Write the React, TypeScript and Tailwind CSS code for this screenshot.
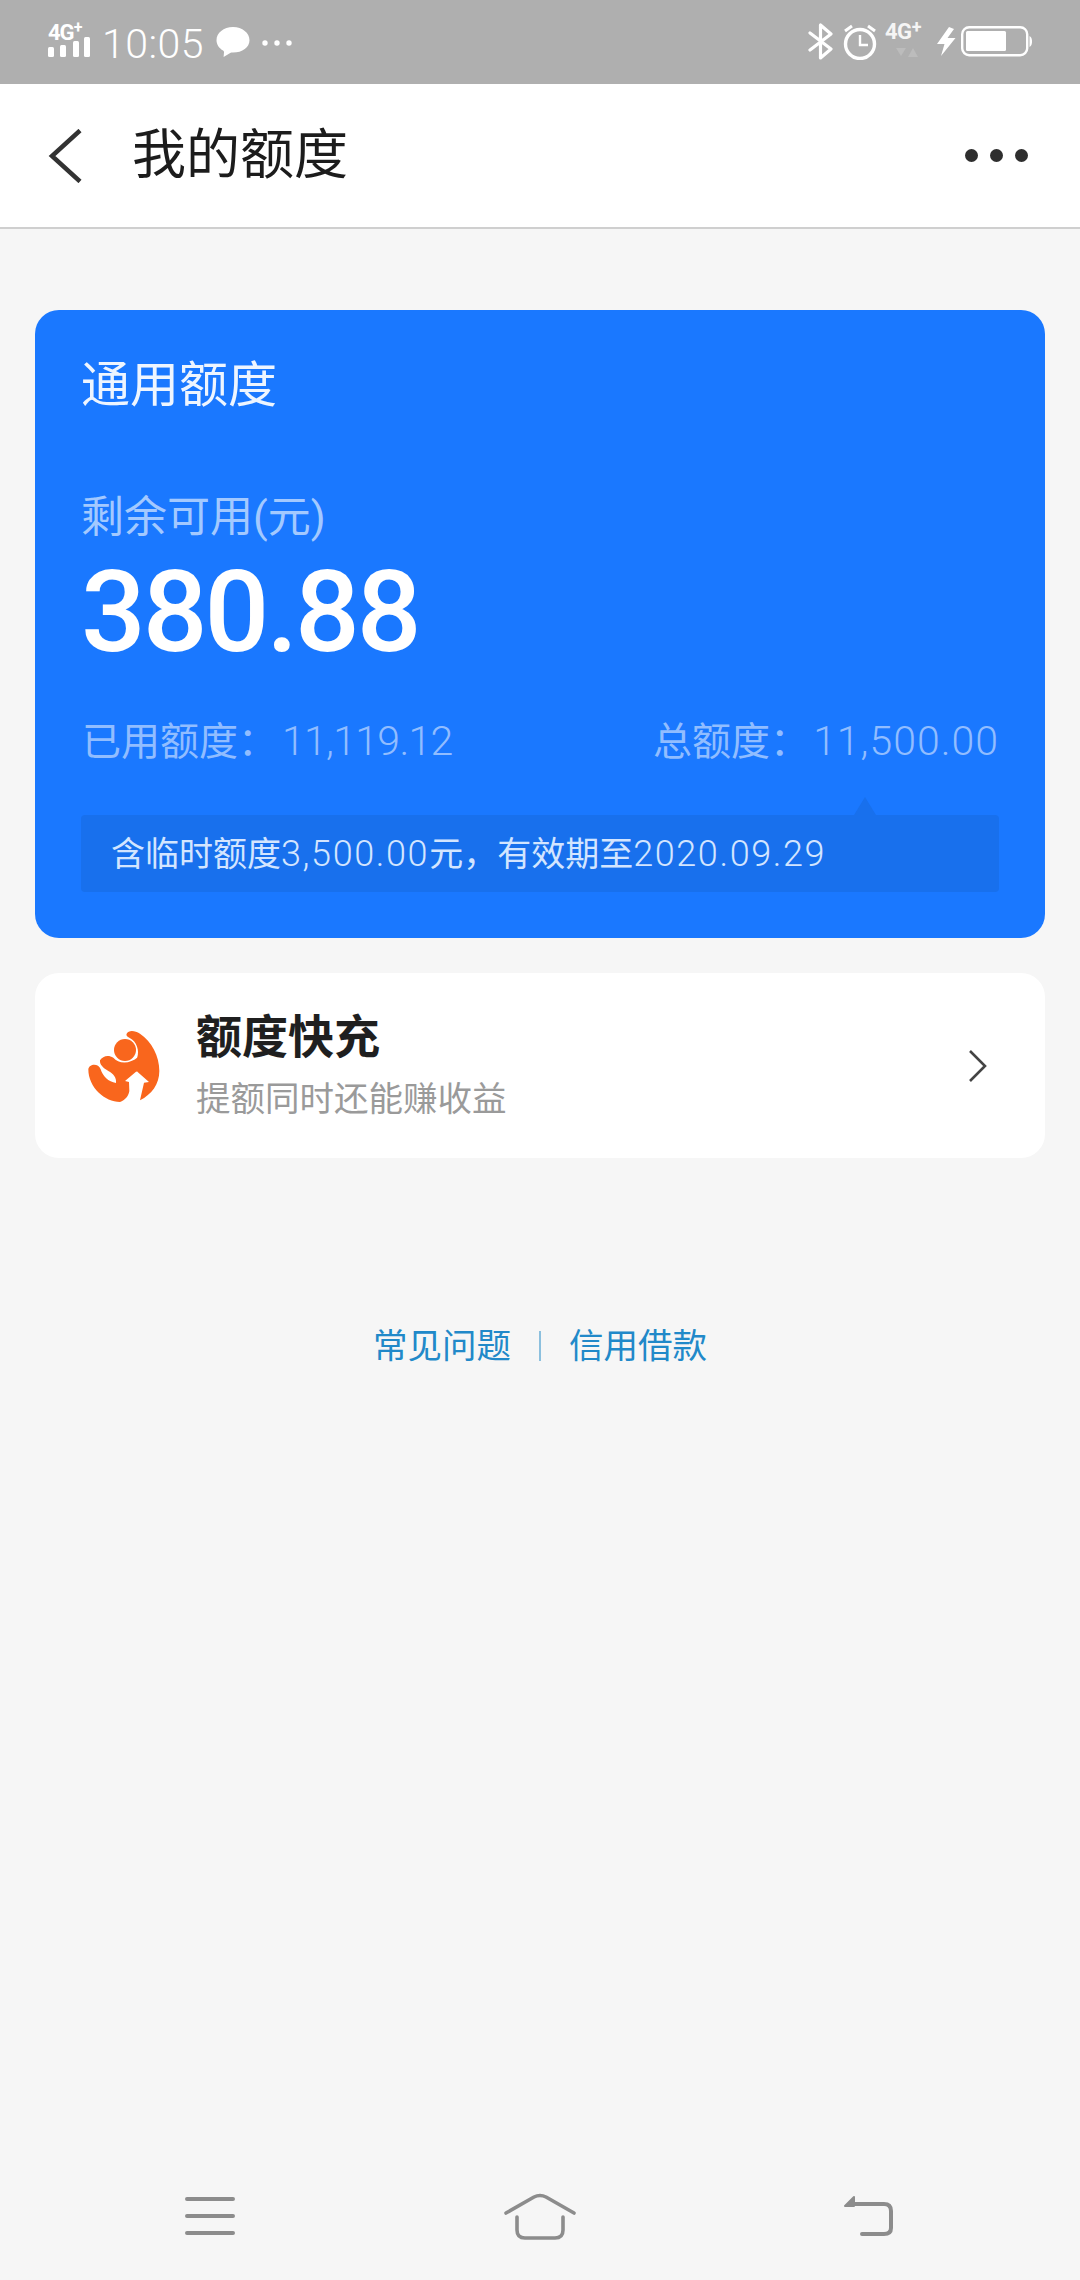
import React from "react";

const cjk = "font-['Roboto','Noto_Sans_CJK_SC',sans-serif]";

function Signal() {
  return (
    <div className="relative w-[44px] h-[38px]">
      <span className="absolute left-0 top-[-2px] text-[22px] leading-[24px] font-bold text-white tracking-[-1px]">
        4G<sup className="text-[16px] align-baseline relative top-[-7px]">+</sup>
      </span>
      <svg className="absolute left-0 top-0" width="44" height="38" viewBox="0 0 44 38" fill="#fff">
        <rect x="0" y="24" width="6" height="10" rx="1.5" />
        <rect x="12" y="22" width="6" height="12" rx="1.5" />
        <rect x="25" y="18" width="6" height="16" rx="1.5" />
        <rect x="36" y="14" width="6" height="20" rx="1.5" />
      </svg>
    </div>
  );
}

function StatusBar() {
  return (
    <div className={`h-[84px] bg-[#afafaf] flex items-center justify-between pl-[48px] pr-[47px] text-white ${cjk}`}>
      <div className="flex items-center">
        <Signal />
        <span className="ml-[10px] mt-[5px] text-[41px] leading-none font-light tracking-[0.5px] text-white">10:05</span>
        <svg className="ml-[12px] mt-[2px]" width="34" height="34" viewBox="0 0 34 34" fill="#fff">
          <path d="M17 1C7.6 1 .5 7 .5 14.2c0 4.3 2.6 8 6.6 10.4.6.4 1 1 .9 1.7L7.6 31l6.600-4c.7-.4 1.500-.5 2.800-.5 9.400 0 16.500-5.100 16.500-12.300S26.400 1 17 1z" />
        </svg>
        <svg className="ml-[11px] mt-[1px]" width="32" height="10" viewBox="0 0 32 10" fill="#fff">
          <circle cx="4" cy="5" r="2.700" />
          <circle cx="16" cy="5" r="2.700" />
          <circle cx="28" cy="5" r="2.700" />
        </svg>
      </div>
      <div className="flex items-center">
        <svg width="26" height="38" viewBox="0 0 26 38" fill="none" stroke="#fff" strokeWidth="3.200" strokeLinejoin="round" strokeLinecap="round">
          <path d="M2 27 L23 11 L12.500 2 V35 L23 26 L2 10" />
        </svg>
        <svg className="ml-[9px]" width="34" height="36" viewBox="0 0 34 36" fill="none" stroke="#fff">
          <circle cx="17" cy="20" r="14.500" strokeWidth="3.400" />
          <path d="M17 11 V21 H25" strokeWidth="2.400" />
          <path d="M2 7 L9 2 M32 7 L25 2" strokeWidth="3" />
        </svg>
        <div className="relative ml-[8px] w-[40px] h-[38px]">
          <span className="absolute left-0 top-[-3px] text-[22px] leading-[24px] font-bold text-[#f5f5f5] tracking-[-0.5px]">
            4G<sup className="text-[18px] align-baseline relative top-[-6px]">+</sup>
          </span>
          <svg className="absolute left-[10px] top-[24px]" width="24" height="12" viewBox="0 0 24 12" fill="#bcbcbc">
            <path d="M1 1 H11 L6 9 Z" />
            <path d="M13 10 H23 L18 1 Z" />
          </svg>
        </div>
        <svg className="ml-[12px]" width="19" height="30" viewBox="0 0 19 30" fill="#fff">
          <path d="M12 0 L0 17 H7.500 L4 29 L18.500 11 H10.500 L17 2 Z" />
        </svg>
        <svg className="ml-[5px]" width="72" height="32" viewBox="0 0 72 32" fill="none">
          <rect x="1.200" y="1.200" width="65" height="28" rx="7" stroke="#fff" strokeWidth="2.400" />
          <rect x="5" y="5" width="40" height="20" rx="1.500" fill="#fff" />
          <path d="M68.500 10 C70.500 11 71 13 71 15.500 C71 18 70.500 20 68.500 21 Z" fill="#fff" />
        </svg>
      </div>
    </div>
  );
}

function Logo() {
  return (
    <svg width="90" height="90" viewBox="0 0 270 270" fill="#f9661d">
      <circle cx="135" cy="87" r="33" />
      <path d="M140 38 C146 26 165 28 180 38 C215 62 238 105 238 150 C238 190 215 220 180 238 L192 185 L207 183 L172 152 L172 108 C178 90 172 62 148 50 C140 46 138 42 140 38 Z" />
      <path d="M60 118 C68 105 85 100 100 110 C115 129 150 130 174 108 L178 150 L168 152 L135 180 L147 183 L148 210 C146 225 135 238 120 243 C75 243 25 200 25 145 C27 128 55 125 62 145 C68 165 85 183 108 186 C110 170 100 158 85 150 C70 142 58 130 60 118 Z" />
    </svg>
  );
}

function NavBar() {
  const stroke = "#8c8c8c";
  return (
    <div className="mt-auto h-[130px] pt-[2px] flex items-center justify-between pl-[184px] pr-[186px]">
      <svg width="52" height="42" viewBox="0 0 52 42" fill="none" stroke={stroke} strokeWidth="4" strokeLinecap="round">
        <path d="M3 4 H49 M3 21 H49 M3 38 H49" />
      </svg>
      <svg className="ml-[2px]" width="72" height="48" viewBox="0 0 72 48" fill="none" stroke={stroke} strokeWidth="3.600" strokeLinecap="round" strokeLinejoin="round">
        <path d="M2 21 L30 5 Q36 2 42 5 L70 21" />
        <path d="M13 25 V38 Q13 46 21 46 H51 Q59 46 59 38 V25" />
      </svg>
      <svg width="52" height="44" viewBox="0 0 52 44" fill="none" stroke={stroke} strokeWidth="4" strokeLinecap="round" strokeLinejoin="round">
        <path d="M8 10 H42 Q49 10 49 17 V34 Q49 40 42 40 H20" />
        <path d="M12 3 V12 H3 Z" fill={stroke} strokeWidth="2" />
      </svg>
    </div>
  );
}

export default function App() {
  return (
    <div className={`w-[1080px] h-[2280px] bg-[#f6f6f6] flex flex-col ${cjk}`}>
      <StatusBar />

      {/* 헤더 */}
      <header className="h-[145px] bg-white border-b-[2px] border-[#cfcfcf] flex items-center justify-between pl-[48px] pr-[52px]">
        <div className="flex items-center">
          <svg width="34" height="54" viewBox="0 0 34 54" fill="none" stroke="#333" strokeWidth="4.500">
            <path d="M32 1.500 L4 27 L32 52.500" />
          </svg>
          <h1 className="ml-[50px] mt-[1px] text-[54px] leading-none font-normal text-[#1c1c1c]">我的额度</h1>
        </div>
        <div className="flex gap-[12px]">
          <span className="w-[13px] h-[13px] rounded-full bg-[#2e2e2e]" />
          <span className="w-[13px] h-[13px] rounded-full bg-[#2e2e2e]" />
          <span className="w-[13px] h-[13px] rounded-full bg-[#2e2e2e]" />
        </div>
      </header>

      <main className="pt-[81px] px-[35px]">
        <section className="h-[628px] rounded-[24px] bg-[#1a78ff] px-[47px] pt-[48px]">
          <div className="-ml-[1px] text-[49px] leading-[56px] text-[#eef5ff]">通用额度</div>
          <div className="mt-[78px] -ml-[1px] text-[43px] leading-[50px] text-[#a3c9ff]">剩余可用(元)</div>
          <div className="mt-[15px] -ml-[1px] text-[114px] leading-[110px] font-medium tracking-[-3px] text-white">380.88</div>
          <div className="mt-[49px] flex justify-between text-[39px] leading-[50px] text-[#91bdff]">
            <span>
              已用额度：<span className="ml-[5px] text-[41px] font-light tracking-[-0.7px]">11,119.12</span>
            </span>
            <span className="-mr-[1px]">
              总额度：<span className="ml-[4px] text-[41px] font-light tracking-[1px]">11,500.00</span>
            </span>
          </div>
          <div className="relative mt-[48px] h-[77px] -mx-[1px] rounded-[4px] bg-[#1870ed] pl-[30px] flex items-center text-[34px] text-[#d3e5ff]">
            <span className="absolute right-[123px] top-[-18px] w-0 h-0 border-x-[11px] border-x-transparent border-b-[18px] border-b-[#1870ed]" />
            <span>
              含临时额度<span className="text-[36px] font-light tracking-[1.6px]">3,500.00</span>元，有效期至<span className="text-[36px] font-light tracking-[1.6px]">2020.09.29</span>
            </span>
          </div>
        </section>

        <section className="mt-[35px] h-[185px] rounded-[24px] bg-white flex items-center pl-[45px] pr-[57px]">
          <Logo />
          <div className="ml-[26px] flex-1">
            <div className="text-[46px] leading-[54px] font-bold text-[#1f1f1f]">额度快充</div>
            <div className="mt-[12px] text-[34.5px] leading-[46px] text-[#9a9a9a]">提额同时还能赚收益</div>
          </div>
          <svg width="20" height="34" viewBox="0 0 20 34" fill="none" stroke="#444" strokeWidth="2.600">
            <path d="M2 2 L17 17 L2 32" />
          </svg>
        </section>

        <div className="mt-[164px] flex items-center justify-center text-[34.5px] leading-[48px] text-[#2189c9]">
          <span>常见问题</span>
          <span className="mx-[28px] w-[2px] h-[30px] bg-[#8cc0de]" />
          <span>信用借款</span>
        </div>
      </main>

      <NavBar />
    </div>
  );
}
